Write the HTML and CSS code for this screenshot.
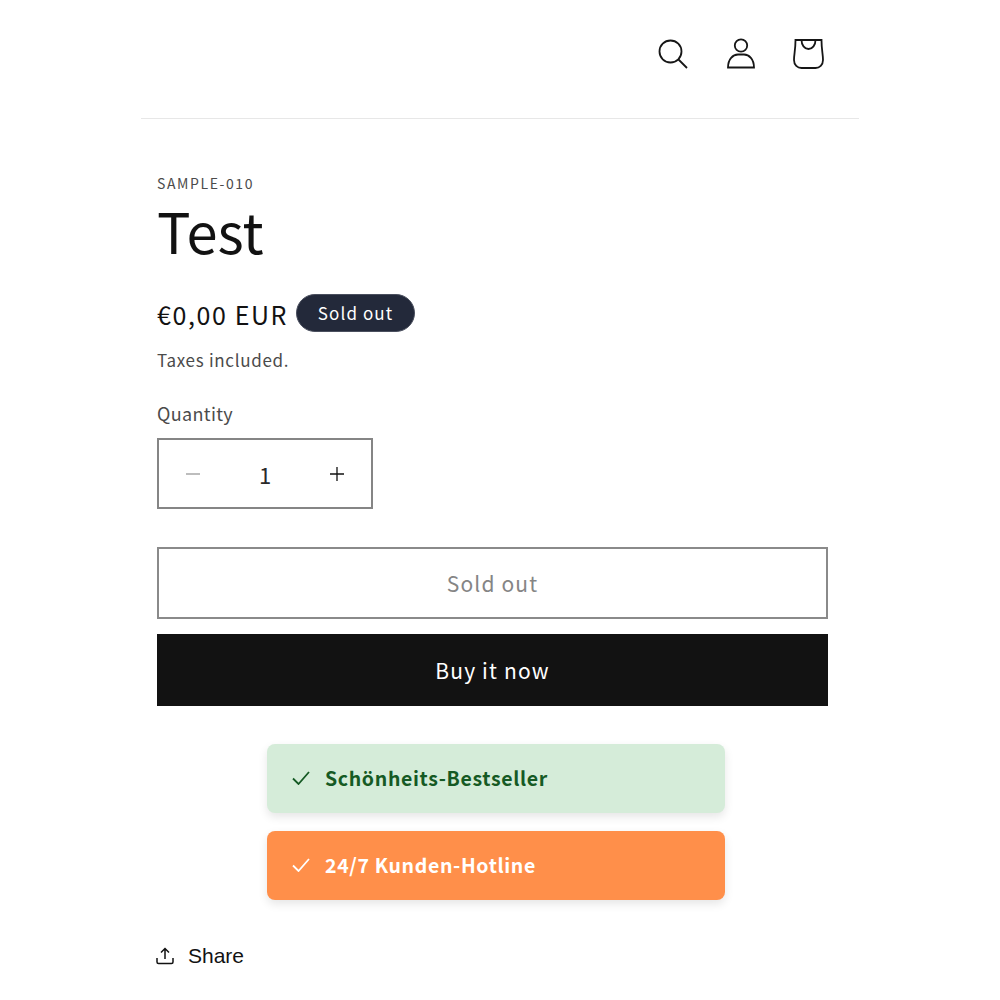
FILE: index.html
```html
<!DOCTYPE html>
<html lang="en">
<head>
<meta charset="utf-8">
<title>Test</title>
<link rel="stylesheet" href="styles.css">
</head>
<body>
<div class="page">
  <header class="header">
    <svg class="icon" viewBox="0 0 32 32" width="32" height="32" aria-hidden="true"><circle cx="13.5" cy="13.5" r="11"/><path d="M21.5 21.5 L30 30"/></svg>
    <svg class="icon" viewBox="0 0 32 32" width="32" height="32" aria-hidden="true"><circle cx="16" cy="7.5" r="6.2"/><path d="M3 29.5 C3 21 8 16.5 13 16.5 H19 C24 16.5 29 21 29 29.5 Z"/></svg>
    <svg class="icon" viewBox="0 0 32 32" width="32" height="32" aria-hidden="true"><path d="M2.500 2 H28.500 C28.500 12 30 16 30 22 C30 27 26.500 30 22.500 30 H8.500 C4.500 30 1 27 1 22 C1 16 2.500 12 2.500 2 Z"/><path d="M8.500 2 C8.500 7 11.500 11 15.500 11 C19.500 11 22.500 7 22.500 2"/></svg>
  </header>
  <main class="product">
    <p class="sku">SAMPLE-010</p>
    <h1 class="title">Test</h1>
    <div class="price-row">
      <span class="price">€0,00 EUR</span>
      <span class="pill">Sold out</span>
    </div>
    <p class="tax">Taxes included.</p>
    <p class="qty-label">Quantity</p>
    <div class="qty">
      <svg class="qty-icon minus" viewBox="0 0 14 14" width="14" height="14" aria-hidden="true"><path d="M0 7 H14"/></svg>
      <span class="qty-value">1</span>
      <svg class="qty-icon" viewBox="0 0 14 14" width="14" height="14" aria-hidden="true"><path d="M0 7 H14 M7 0 V14"/></svg>
    </div>
    <div class="btn btn-outline">Sold out</div>
    <div class="btn btn-solid">Buy it now</div>
    <div class="badges">
      <div class="badge badge-green">
        <svg class="check" viewBox="0 0 18 14" width="18" height="14" aria-hidden="true"><path d="M1 7.500 L6.500 13 L17 1"/></svg>
        <span>Schönheits-Bestseller</span>
      </div>
      <div class="badge badge-orange">
        <svg class="check" viewBox="0 0 18 14" width="18" height="14" aria-hidden="true"><path d="M1 7.500 L6.500 13 L17 1"/></svg>
        <span>24/7 Kunden-Hotline</span>
      </div>
    </div>
    <div class="share">
      <svg class="share-icon" viewBox="0 0 18 18" width="18" height="18" aria-hidden="true"><path d="M9 12 V2 M5 5.500 L9 1.500 L13 5.500 M1 11 V15 Q1 16.500 2.500 16.500 H15.500 Q17 16.500 17 15 V11"/></svg>
      <span>Share</span>
    </div>
  </main>
</div>
</body>
</html>
```
FILE: styles.css
```css
* { box-sizing: border-box; }
html, body { margin: 0; padding: 0; background: #fff; }
body {
  font-family: "Noto Sans CJK JP", "Noto Sans", sans-serif;
  color: #121212;
  height: 1000px;
  overflow: hidden;
}
p, h1 { margin: 0; }
.page { width: 718px; margin: 0 auto; }
.header {
  height: 119px;
  border-bottom: 1px solid #e7e7e7;
  display: flex;
  justify-content: flex-end;
  gap: 36px;
  padding: 38px 34px 0 0;
}
.icon { fill: none; stroke: #161616; stroke-width: 1.800; }
.product { padding: 54px 0 0 16px; }
.sku {
  font-size: 14px;
  line-height: 20px;
  letter-spacing: 1.600px;
  color: #4b4b4b;
}
.title {
  font-size: 56px;
  line-height: 70px;
  font-weight: 400;
  margin-top: 2px;
}
.price-row {
  display: flex;
  align-items: center;
  gap: 8px;
  margin-top: 30px;
}
.price { font-size: 25px; line-height: 38px; letter-spacing: 1.600px; }
.pill {
  background: #23293a;
  color: #fff;
  border: 1px solid #4a4f5e;
  border-radius: 20px;
  width: 119px;
  height: 38px;
  margin-top: -2px;
  font-size: 17px;
  line-height: 35px;
  letter-spacing: 1.100px;
  text-align: center;
}
.tax {
  font-size: 17px;
  line-height: 24px;
  letter-spacing: 0.700px;
  color: #4b4b4b;
  margin-top: 15px;
}
.qty-label {
  font-size: 18px;
  line-height: 28px;
  letter-spacing: 0.350px;
  color: #4b4b4b;
  margin-top: 27px;
}
.qty {
  width: 216px;
  height: 71px;
  border: 2px solid #858585;
  margin-top: 11px;
  display: flex;
  align-items: center;
  justify-content: space-between;
  padding: 0 27px;
}
.qty-icon { fill: none; stroke: #121212; stroke-width: 1.300; }
.qty-icon.minus { stroke: #999; }
.qty-value { font-size: 22px; line-height: 28px; color: #2a2a2a; }
.btn {
  width: 671px;
  height: 72px;
  display: flex;
  align-items: center;
  justify-content: center;
  font-size: 21px;
  letter-spacing: 1.150px;
}
.btn-outline {
  border: 2px solid #8a8a8a;
  color: #858585;
  margin-top: 38px;
}
.btn-solid {
  background: #121212;
  color: #fff;
  margin-top: 15px;
}
.badges {
  width: 458px;
  margin: 38px 0 0 110px;
  display: flex;
  flex-direction: column;
  gap: 18px;
}
.badge {
  height: 69px;
  border-radius: 8px;
  display: flex;
  align-items: center;
  gap: 15px;
  padding: 0 0 2px 25px;
  font-size: 19.500px;
  font-weight: 700;
  letter-spacing: 0.650px;
  box-shadow: 0 4px 10px rgba(0, 0, 0, 0.1);
}
.badge-green { background: #d5ecd9; color: #155a24; }
.badge-orange { background: #ff8f4a; color: #fff; }
.check { fill: none; stroke: currentColor; stroke-width: 1.800; flex: none; }
.share {
  display: flex;
  align-items: center;
  gap: 14px;
  margin: 42px 0 0 -1px;
  font-family: "Liberation Sans", Arial, sans-serif;
  font-size: 21px;
  line-height: 28px;
}
.share-icon { fill: none; stroke: #121212; stroke-width: 1.500; }
```
